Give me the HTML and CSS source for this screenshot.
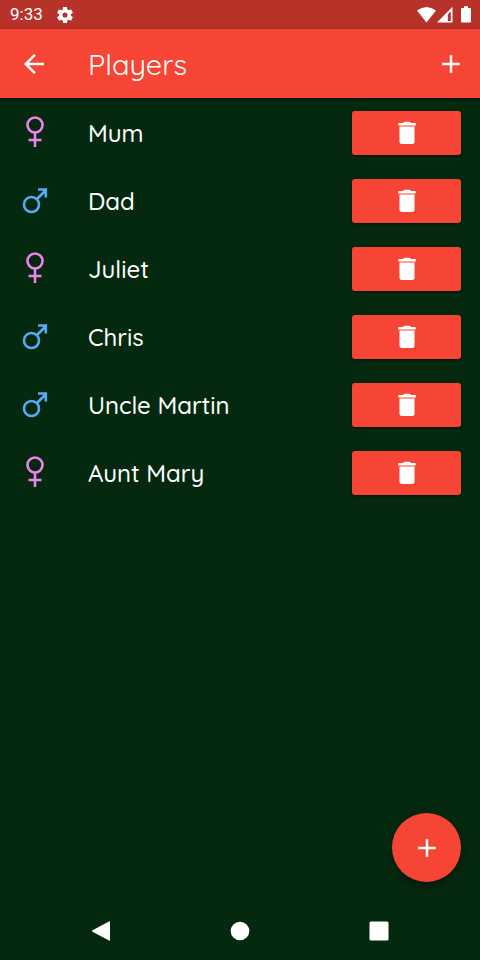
FILE: index.html
```html
<!DOCTYPE html>
<html lang="en">
<head>
<meta charset="utf-8">
<meta name="viewport" content="width=device-width, initial-scale=1">
<title>Players</title>
<link rel="stylesheet" href="styles.css">
</head>
<body>
<svg class="defs" aria-hidden="true">
  <symbol id="female" viewBox="0 0 30 34"><circle cx="15" cy="9" r="7.500"/><path d="M15 16.500V31M8.500 24H21.500"/></symbol>
  <symbol id="male" viewBox="0 0 30 34"><circle cx="11.500" cy="20.500" r="7.500"/><path d="M17 15L25.500 6.500M18 5.500H25.800V13.500"/></symbol>
  <symbol id="trash" viewBox="0 0 20 24"><path d="M2 2H6Q6.800.8 8 .8H12Q13.200.8 14 2H18Q18.800 2 18.800 2.800V4.500H1.200V2.800Q1.200 2 2 2Z"/><path d="M2.500 5.600H17.500V20.500Q17.500 23 15 23H5Q2.500 23 2.500 20.500Z"/></symbol>
  <symbol id="plus" viewBox="0 0 24 24"><path d="M19 13h-6v6h-2v-6H5v-2h6V5h2v6h6z"/></symbol>
</svg>
<div class="screen">
  <div class="status">
    <time>9:33</time>
    <svg class="gear" viewBox="2 2 20 20"><path fill-rule="evenodd" d="M19.430 12.980c.04-.32.07-.64.07-.98s-.03-.66-.07-.98l2.110-1.650c.19-.15.24-.42.12-.64l-2-3.460c-.12-.22-.39-.3-.61-.22l-2.490 1c-.52-.4-1.080-.73-1.690-.98l-.38-2.650A.488.488 0 0 0 14 2h-4c-.25 0-.46.18-.49.42l-.38 2.650c-.61.25-1.170.59-1.690.98l-2.490-1c-.23-.09-.49 0-.61.22l-2 3.460c-.13.22-.07.49.12.64l2.110 1.650c-.04.32-.07.65-.07.98s.03.66.07.98l-2.110 1.650c-.19.15-.24.42-.12.64l2 3.460c.12.22.39.3.61.22l2.490-1c.52.4 1.080.73 1.690.98l.38 2.650c.03.24.24.42.49.42h4c.25 0 .46-.18.49-.42l.38-2.650c.61-.25 1.170-.59 1.690-.98l2.490 1c.23.09.49 0 .61-.22l2-3.460c.12-.22.07-.49-.12-.64zM12 15.200a3.200 3.200 0 1 1 0-6.400a3.200 3.200 0 0 1 0 6.400z"/></svg>
    <svg class="signals" viewBox="0 0 55 18"><path d="M0 4.500Q9.500-2.500 19 4.500L9.500 16.500Z"/><path fill-rule="evenodd" d="M20 16.500L35.500 .8V16.500ZM30.800 15H33.800V5.500L30.800 8.500Z"/><path d="M47 .3H51V2H53Q54 2 54 3V15.500Q54 16.500 53 16.500H45Q44 16.500 44 15.500V3Q44 2 45 2H47Z"/></svg>
  </div>
  <header class="bar">
    <button class="icon" aria-label="Back"><svg viewBox="0 0 24 24"><path d="M20 11H7.830l5.590-5.590L12 4l-8 8 8 8 1.410-1.410L7.830 13H20z"/></svg></button>
    <h1>Players</h1>
    <button class="icon" aria-label="Add player"><svg><use href="#plus"/></svg></button>
  </header>
  <ul class="list">
    <li><svg class="sex female"><use href="#female"/></svg><span>Mum</span><button class="delete" aria-label="Delete Mum"><svg><use href="#trash"/></svg></button></li>
    <li><svg class="sex male"><use href="#male"/></svg><span>Dad</span><button class="delete" aria-label="Delete Dad"><svg><use href="#trash"/></svg></button></li>
    <li><svg class="sex female"><use href="#female"/></svg><span>Juliet</span><button class="delete" aria-label="Delete Juliet"><svg><use href="#trash"/></svg></button></li>
    <li><svg class="sex male"><use href="#male"/></svg><span>Chris</span><button class="delete" aria-label="Delete Chris"><svg><use href="#trash"/></svg></button></li>
    <li><svg class="sex male"><use href="#male"/></svg><span>Uncle Martin</span><button class="delete" aria-label="Delete Uncle Martin"><svg><use href="#trash"/></svg></button></li>
    <li><svg class="sex female"><use href="#female"/></svg><span>Aunt Mary</span><button class="delete" aria-label="Delete Aunt Mary"><svg><use href="#trash"/></svg></button></li>
  </ul>
  <button class="fab" aria-label="Add player"><svg><use href="#plus"/></svg></button>
  <nav class="nav">
    <button aria-label="Back"><svg viewBox="0 0 20 20"><path d="M18 .5Q19 0 19 1V19Q19 20 18 19.500L1.500 10.800Q.3 10 1.500 9.200Z"/></svg></button>
    <button aria-label="Home"><svg viewBox="0 0 20 20"><circle cx="10" cy="10" r="9.300"/></svg></button>
    <button aria-label="Recent apps"><svg viewBox="0 0 20 20"><rect x=".5" y=".5" width="19" height="19" rx="1.500"/></svg></button>
  </nav>
</div>
</body>
</html>
```
FILE: styles.css
```css
* { box-sizing: border-box; }

body {
  margin: 0;
  background: #05290f;
  color: #fff;
  font-family: Quicksand, Lato, sans-serif;
}

button {
  padding: 0;
  border: 0;
  background: none;
  color: inherit;
  display: grid;
  place-items: center;
}

svg { display: block; fill: currentColor; }

.defs { position: absolute; width: 0; height: 0; }

.screen {
  min-height: 100vh;
  display: flex;
  flex-direction: column;
}

.status {
  height: 29px;
  padding: 0 8px 0 10px;
  display: flex;
  align-items: center;
  gap: 14px;
  background: #b73229;
  font: 17px/29px Roboto, sans-serif;
}

.gear { width: 16px; height: 16px; }

.signals { width: 55px; height: 18px; margin-left: auto; }

.bar {
  height: 69px;
  padding: 0 14px 0 19px;
  display: flex;
  align-items: center;
  background: #f64435;
  box-shadow: 0 1px 3px rgba(0, 0, 0, .6);
}

.icon svg, .fab svg { width: 30px; height: 30px; }

h1 {
  flex: 1;
  margin: 0 0 0 39px;
  font-size: 29px;
  line-height: 40px;
  font-weight: 400;
}

.list {
  margin: 0;
  padding: 1px 19px 0 20px;
  list-style: none;
  font-size: 24px;
  font-weight: 500;
  line-height: 32px;
}

.list li {
  height: 68px;
  display: flex;
  align-items: center;
}

.list span { flex: 1; margin-left: 38px; }

.sex {
  width: 30px;
  height: 34px;
  fill: none;
  stroke: currentColor;
  stroke-width: 2.6;
}

.female { color: #ee82ee; }
.male { color: #5aa9f5; }

.delete {
  width: 109px;
  height: 44px;
  border-radius: 3px;
  background: #f64435;
  box-shadow: 0 1px 3px rgba(0, 0, 0, .5);
}

.delete svg { width: 20px; height: 24px; }

.fab {
  width: 69px;
  height: 69px;
  margin: auto 19px 20px auto;
  border-radius: 50%;
  background: #f64435;
  box-shadow: 0 4px 8px rgba(0, 0, 0, .4);
}

.nav {
  height: 58px;
  padding: 0 32px;
  display: grid;
  grid-template-columns: repeat(3, 1fr);
}

.nav svg { width: 20px; height: 20px; }
```
